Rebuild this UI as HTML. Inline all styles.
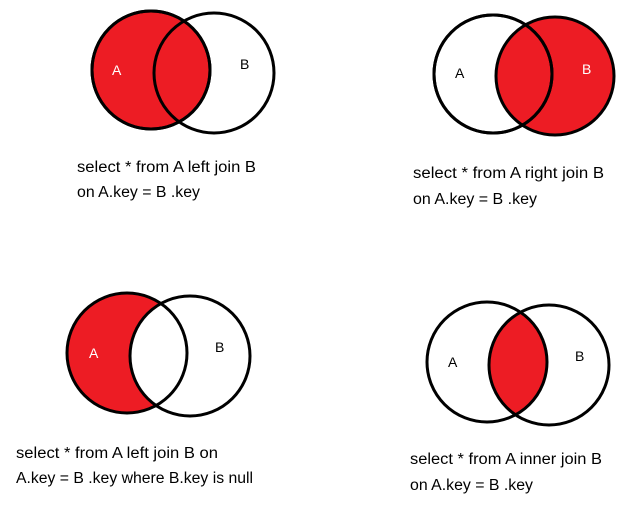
<!DOCTYPE html>
<html><head><meta charset="utf-8"><style>
html,body{margin:0;padding:0;background:#fff;}
svg{display:block;}
text{font-family:"Liberation Sans",sans-serif;fill:#000;}
.t{font-size:15.5px;}
.l{font-size:14px;}
</style></head><body>
<svg width="636" height="509" viewBox="0 0 636 509">
<defs>
<clipPath id="c3"><circle cx="487" cy="362" r="60"/></clipPath>
<mask id="m1"><rect width="636" height="509" fill="#fff"/><circle cx="190" cy="356" r="60" fill="#000"/></mask>
</defs>
<g stroke="#000" stroke-width="3" fill="none">
<circle cx="151" cy="70" r="59" fill="#ed1c24"/>
<circle cx="214" cy="73" r="60"/>
<circle cx="555" cy="76" r="59" fill="#ed1c24"/>
<circle cx="493" cy="74" r="59"/>
<circle cx="127" cy="353" r="60" fill="#ed1c24" stroke="none" mask="url(#m1)"/>
<circle cx="127" cy="353" r="60"/>
<circle cx="190" cy="356" r="60"/>
<circle cx="549" cy="365" r="60" fill="#ed1c24" stroke="none" clip-path="url(#c3)"/>
<circle cx="487" cy="362" r="60"/>
<circle cx="549" cy="365" r="60"/>
<circle cx="151" cy="70" r="59"/>
<circle cx="493" cy="74" r="59"/>
</g>
<text class="l" x="112" y="75" style="fill:#fff">A</text>
<text class="l" x="240" y="69">B</text>
<text class="l" x="455" y="78">A</text>
<text class="l" x="582" y="74" style="fill:#fff">B</text>
<text class="l" x="89" y="358" style="fill:#fff">A</text>
<text class="l" x="215" y="352">B</text>
<text class="l" x="448" y="367">A</text>
<text class="l" x="575" y="361">B</text>

<text class="t" x="77" y="172" textLength="179" lengthAdjust="spacingAndGlyphs">select * from A left join B</text>
<text class="t" x="77" y="197" textLength="123" lengthAdjust="spacingAndGlyphs">on A.key = B .key</text>
<text class="t" x="413" y="178" textLength="191" lengthAdjust="spacingAndGlyphs">select * from A right join B</text>
<text class="t" x="413" y="204" textLength="124" lengthAdjust="spacingAndGlyphs">on A.key = B .key</text>
<text class="t" x="16" y="458" textLength="202" lengthAdjust="spacingAndGlyphs">select * from A left join B on</text>
<text class="t" x="16" y="483" textLength="237" lengthAdjust="spacingAndGlyphs">A.key = B .key where B.key is null</text>
<text class="t" x="410" y="464" textLength="192" lengthAdjust="spacingAndGlyphs">select * from A inner join B</text>
<text class="t" x="410" y="490" textLength="123" lengthAdjust="spacingAndGlyphs">on A.key = B .key</text>
</svg>
</body></html>
